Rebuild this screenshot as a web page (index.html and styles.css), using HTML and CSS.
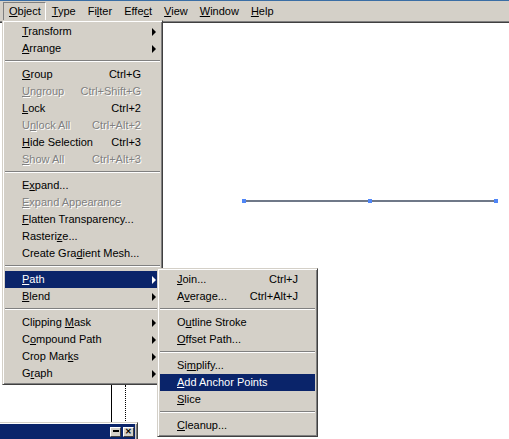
FILE: index.html
```html
<!DOCTYPE html>
<html lang="en">
<head>
  <meta charset="UTF-8">
  <title>Object menu</title>
  <link rel="stylesheet" href="styles.css">
</head>
<body>
  <div class="titlestrip"></div>
  <div class="menubar">
    <span class="top-item pressed"><u>O</u>bject</span>
    <span class="top-item"><u>T</u>ype</span>
    <span class="top-item">Fi<u>l</u>ter</span>
    <span class="top-item">Effe<u>c</u>t</span>
    <span class="top-item"><u>V</u>iew</span>
    <span class="top-item"><u>W</u>indow</span>
    <span class="top-item"><u>H</u>elp</span>
  </div>

  <!-- artboard: selected straight path with three anchors -->
  <div class="segment">
    <span class="anchor a1"></span>
    <span class="anchor a2"></span>
    <span class="anchor a3"></span>
  </div>

  <div class="guide solid"></div>
  <div class="guide dotted"></div>

  <div class="palette">
    <div class="palette-title">
      <span class="cap-btn minimize"><i></i></span>
      <span class="cap-btn close">&#x2715;</span>
    </div>
  </div>

  <div class="menu object-menu">
    <div class="item sub"><span class="label"><u>T</u>ransform</span></div>
    <div class="item sub"><span class="label"><u>A</u>rrange</span></div>
    <div class="sep"></div>
    <div class="item"><span class="label"><u>G</u>roup</span><span class="key">Ctrl+G</span></div>
    <div class="item disabled"><span class="label"><u>U</u>ngroup</span><span class="key">Ctrl+Shift+G</span></div>
    <div class="item"><span class="label"><u>L</u>ock</span><span class="key">Ctrl+2</span></div>
    <div class="item disabled"><span class="label">U<u>n</u>lock All</span><span class="key">Ctrl+Alt+2</span></div>
    <div class="item"><span class="label"><u>H</u>ide Selection</span><span class="key">Ctrl+3</span></div>
    <div class="item disabled"><span class="label"><u>S</u>how All</span><span class="key">Ctrl+Alt+3</span></div>
    <div class="sep"></div>
    <div class="item"><span class="label">E<u>x</u>pand...</span></div>
    <div class="item disabled"><span class="label"><u>E</u>xpand Appearance</span></div>
    <div class="item"><span class="label"><u>F</u>latten Transparency...</span></div>
    <div class="item"><span class="label">Rasteri<u>z</u>e...</span></div>
    <div class="item"><span class="label">Create Gra<u>d</u>ient Mesh...</span></div>
    <div class="sep"></div>
    <div class="item sub active"><span class="label"><u>P</u>ath</span></div>
    <div class="item sub"><span class="label"><u>B</u>lend</span></div>
    <div class="sep"></div>
    <div class="item sub"><span class="label">Clipping <u>M</u>ask</span></div>
    <div class="item sub"><span class="label">C<u>o</u>mpound Path</span></div>
    <div class="item sub"><span class="label">Crop Mar<u>k</u>s</span></div>
    <div class="item sub"><span class="label">G<u>r</u>aph</span></div>
  </div>

  <div class="menu path-menu">
    <div class="item"><span class="label"><u>J</u>oin...</span><span class="key">Ctrl+J</span></div>
    <div class="item"><span class="label">A<u>v</u>erage...</span><span class="key">Ctrl+Alt+J</span></div>
    <div class="sep"></div>
    <div class="item"><span class="label">O<u>u</u>tline Stroke</span></div>
    <div class="item"><span class="label"><u>O</u>ffset Path...</span></div>
    <div class="sep"></div>
    <div class="item"><span class="label">Si<u>m</u>plify...</span></div>
    <div class="item active"><span class="label"><u>A</u>dd Anchor Points</span></div>
    <div class="item"><span class="label"><u>S</u>lice</span></div>
    <div class="sep"></div>
    <div class="item"><span class="label"><u>C</u>leanup...</span></div>
  </div>
</body>
</html>
```

FILE: styles.css
```css
body {
  margin: 0;
  width: 509px;
  height: 439px;
  overflow: hidden;
  position: relative;
  background: #fff;
  font-family: "Liberation Sans", Arial, sans-serif;
  font-size: 11px;
  color: #000;
}
u {
  text-underline-offset: 1px;
}
.titlestrip {
  height: 1px;
  background: #3a6ea5;
}
.menubar {
  display: flex;
  height: 20px;
  padding-left: 3px;
  background: #d4d0c8;
  border-bottom: 1px solid #808080;
  box-shadow: 0 1px 0 #404040;
}
.top-item {
  padding: 0 6px;
  line-height: 20px;
}
.top-item.pressed {
  margin-top: 1px;
  height: 17px;
  line-height: 17px;
  padding: 0 4px 0 5px;
  border: 1px solid;
  border-color: #808080 #fff #fff #808080;
}

/* drop-down menus */
.menu {
  position: absolute;
  width: 155px;
  padding: 2px;
  background: #d4d0c8;
  border: 1px solid;
  border-color: #d4d0c8 #404040 #404040 #d4d0c8;
  box-shadow: inset 1px 1px #fff, inset -1px -1px #808080;
}
.object-menu {
  left: 2px;
  top: 20px;
}
.path-menu {
  left: 157px;
  top: 268px;
}
.item {
  position: relative;
  display: flex;
  height: 17px;
  line-height: 17px;
  padding: 0 19px 0 17px;
  white-space: nowrap;
}
.path-menu .item {
  padding-right: 17px;
}
.item .label {
  flex: 1;
}
.item.disabled {
  color: #808080;
  text-shadow: 1px 1px 0 #fff;
}
.item.active {
  background: #0a246a;
  color: #fff;
}
.item.sub::after {
  content: "";
  position: absolute;
  right: 4px;
  top: 5px;
  border-left: 4px solid #000;
  border-top: 4px solid transparent;
  border-bottom: 4px solid transparent;
}
.item.sub.active::after {
  border-left-color: #fff;
}
.sep {
  position: relative;
  height: 9px;
}
.sep::before {
  content: "";
  position: absolute;
  left: 0;
  right: 0;
  top: 3px;
  height: 1px;
  background: #808080;
  border-bottom: 1px solid #fff;
}

/* artboard */
.segment {
  position: absolute;
  left: 244px;
  top: 200px;
  width: 252px;
  height: 2px;
  background: #6f7888;
}
.anchor {
  position: absolute;
  top: -1px;
  width: 4px;
  height: 4px;
  background: #4f86f7;
}
.a1 { left: -2px; }
.a2 { left: 124px; }
.a3 { left: 250px; }

.guide {
  position: absolute;
  top: 385px;
  height: 38px;
  width: 0;
}
.guide.solid {
  left: 111px;
  border-left: 1px solid #000;
}
.guide.dotted {
  left: 125px;
  border-left: 1px dotted #000;
}

/* floating palette */
.palette {
  position: absolute;
  left: 0;
  top: 422px;
  width: 135px;
  height: 20px;
  background: #d4d0c8;
  border-top: 1px solid #d4d0c8;
  border-right: 1px solid #404040;
  box-shadow: inset 0 1px #fff, inset -1px 0 #808080;
  padding: 1px 2px 0 0;
}
.palette-title {
  display: flex;
  justify-content: flex-end;
  align-items: center;
  gap: 2px;
  height: 16px;
  padding-right: 1px;
  background: #0a246a;
}
.cap-btn {
  position: relative;
  width: 9px;
  height: 8px;
  background: #d4d0c8;
  border: 1px solid;
  border-color: #fff #404040 #404040 #fff;
  font-size: 8px;
  font-weight: bold;
  line-height: 8px;
  text-align: center;
  overflow: hidden;
}
.cap-btn.minimize i {
  position: absolute;
  left: 2px;
  top: 2px;
  width: 6px;
  height: 2px;
  background: #000;
}
```
